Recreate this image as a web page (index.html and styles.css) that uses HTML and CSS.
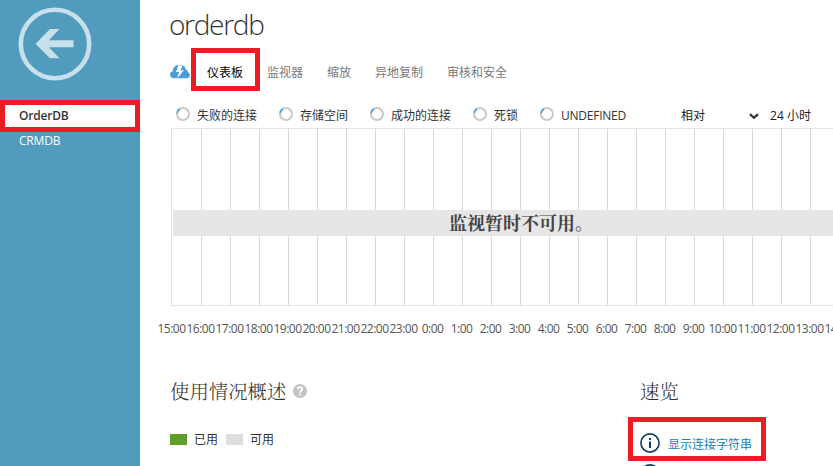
FILE: index.html
```html
<!DOCTYPE html>
<html lang="zh-CN">
<head>
<meta charset="utf-8">
<title>orderdb</title>
<link rel="stylesheet" href="styles.css">
</head>
<body>
<aside class="sidebar">
  <svg class="back" width="74" height="74" viewBox="0 0 74 74">
    <circle cx="37" cy="37" r="34.2" fill="none" stroke="#c8dfec" stroke-width="4.6"/>
    <path d="M17.500 36.700L32 22h9.500L31 33.200H55.500v7H31L41.500 51.300h-9.500z" fill="#c8dfec"/>
  </svg>
  <nav class="databases">
    <a class="database active">OrderDB</a>
    <a class="database">CRMDB</a>
  </nav>
</aside>
<main class="main">
  <h1 class="title"><span>orderdb</span></h1>
  <nav class="tabs">
    <svg class="cloud" width="20" height="14" viewBox="0 0 20 14">
      <path d="M4 13.2C-.9 13-1.1 6.7 2.8 6.200C2.600 1.100 7.500-.7 9.700.5C13-.6 15.500 1.600 15.600 4.400C18 4.500 17.700 6.300 17.500 7.100C20.900 8.200 20.500 13 17 13.200z" fill="#4c9bd9"/>
      <path d="M8.500.5L5.800 7.200l3.400-.4L7.200 13.500L14 5l-3.700.4L12.500.8z" fill="#fff"/>
    </svg>
    <a class="tab current">仪表板</a>
    <a class="tab">监视器</a>
    <a class="tab">缩放</a>
    <a class="tab">异地复制</a>
    <a class="tab">审核和安全</a>
  </nav>
  <div class="metrics">
    <span class="metric"><i class="spinner"></i>失败的连接</span>
    <span class="metric"><i class="spinner"></i>存储空间</span>
    <span class="metric"><i class="spinner"></i>成功的连接</span>
    <span class="metric"><i class="spinner"></i>死锁</span>
    <span class="metric undefined"><i class="spinner"></i>UNDEFINED</span>
    <span class="mode">相对</span>
    <svg class="chevron" width="10" height="7" viewBox="0 0 10 7"><path d="M1 1.200L5 4.800L9 1.200" fill="none" stroke="#333" stroke-width="2.300"/></svg>
    <span class="range">24 小时</span>
  </div>
  <div class="chart"><div class="notice">监视暂时不可用。</div></div>
  <div class="axis">
    <span>15:00</span><span>16:00</span><span>17:00</span><span>18:00</span><span>19:00</span><span>20:00</span><span>21:00</span><span>22:00</span><span>23:00</span><span>0:00</span><span>1:00</span><span>2:00</span><span>3:00</span><span>4:00</span><span>5:00</span><span>6:00</span><span>7:00</span><span>8:00</span><span>9:00</span><span>10:00</span><span>11:00</span><span>12:00</span><span>13:00</span><span>14:00</span>
  </div>
  <div class="panels">
    <section class="usage">
      <h2>使用情况概述
        <svg width="14" height="14" viewBox="0 0 14 14"><circle cx="7" cy="7" r="7" fill="#c3c3c3"/><path d="M4.700 5.300C4.700 2.400 9.300 2.400 9.300 5.100C9.300 6.800 7 6.700 7 8.700M7 9.700v1.900" fill="none" stroke="#fff" stroke-width="1.800"/></svg>
      </h2>
      <div class="legend"><i class="swatch used"></i><span>已用</span><i class="swatch free"></i><span>可用</span></div>
    </section>
    <section class="glance">
      <h2>速览</h2>
      <div class="links">
        <a class="link"><svg width="20" height="20" viewBox="0 0 20 20"><circle cx="10" cy="10" r="9.100" fill="none" stroke="#123f57" stroke-width="1.600"/><path d="M10 5v2M10 8.500V15" stroke="#123f57" stroke-width="2"/></svg><span>显示连接字符串</span></a>
        <svg width="20" height="20" viewBox="0 0 20 20"><circle cx="10" cy="10" r="9.100" fill="none" stroke="#123f57" stroke-width="1.600"/></svg>
      </div>
    </section>
  </div>
</main>
</body>
</html>
```
FILE: styles.css
```css
*, *::before { box-sizing: border-box; }
body {
  margin: 0;
  width: 833px;
  height: 466px;
  overflow: hidden;
  display: flex;
  background: #fff;
  color: #333;
  font: 12px/16px "Open Sans", "Noto Sans CJK SC", sans-serif;
}
.sidebar { width: 140px; flex: none; background: #519bbd; }
.back { display: block; margin: 7px 0 19px 18px; }
.database { display: block; height: 18px; padding-left: 19px; color: #fff; line-height: 18px; letter-spacing: -0.2px; }
.database.active {
  height: 32px;
  border: 5px solid #ed1c24;
  padding-left: 14px;
  background: #fff;
  color: #333;
  font-weight: 600;
  line-height: 22px;
}
.main { width: 693px; height: 466px; flex: none; overflow: hidden; }
.title { margin: 0; padding: 5px 0 0 29px; height: 58px; font-size: 28px; line-height: 38px; font-weight: 300; letter-spacing: -1.3px; }
.tabs { display: flex; align-items: center; height: 28px; padding-left: 30px; color: #777; }
.cloud { margin-right: 17px; }
.tab { position: relative; top: 1px; margin-right: 24px; }
.tab.current { color: #000; }
.tab.current::before {
  content: "";
  position: absolute;
  left: -16px;
  top: -17px;
  width: 69px;
  height: 43px;
  border: 5px solid #ed1c24;
}
.metrics { display: flex; align-items: center; height: 42px; padding: 23px 0 5px 36px; white-space: nowrap; }
.metric { display: flex; align-items: center; margin-right: 22px; height: 14px; }
.undefined { width: 86px; margin-right: 55px; font-size: 12px; letter-spacing: -0.25px; }
.spinner {
  width: 14px;
  height: 14px;
  flex: none;
  margin: -4px 7px 0 0;
  border-radius: 50%;
  background: radial-gradient(#fff 0 4.600px, transparent 5.200px), conic-gradient(#c9c9c9 0 76%, #4ba6e3 77% 91%, #c9c9c9 92%);
}
.mode { width: 24px; margin-right: 44px; color: #222; }
.chevron { margin-right: 11px; }
.range { color: #222; }
.chart {
  height: 178px;
  margin-left: 31px;
  padding: 81px 0 0 1px;
  border: 1px solid #e3e3e3;
  border-right: 0;
  background: repeating-linear-gradient(90deg, transparent 0 28px, #d8d8d8 28px 29px) 0 0 / 1000px 100%;
  background-position-x: 1px;
}
.notice {
  height: 26px;
  padding-left: 276px;
  background: #e6e6e6;
  color: #444;
  font: bold 18px/29px "Liberation Serif", "Noto Serif CJK SC", "Noto Sans CJK SC", serif;
}
.axis { display: flex; height: 40px; padding: 15px 0 0 17px; font-size: 12px; letter-spacing: -0.5px; color: #555; }
.axis span { flex: 0 0 29px; text-align: center; }
.panels { display: flex; height: 120px; padding: 33px 0 0 30px; }
.usage { width: 470px; }
h2 { display: flex; align-items: center; gap: 7px; margin: 0; height: 24px; font: 300 19.400px/24px "Noto Serif CJK SC", "Noto Sans CJK SC", serif; }
.legend { display: flex; align-items: center; height: 16px; margin-top: 28px; }
.legend span { margin: 1px 8px 0 7px; }
.swatch { width: 17px; height: 11px; }
.used { background: #5e9e29; }
.free { background: #dedede; }
.links { position: relative; padding-top: 30px; }
.links::before {
  content: "";
  position: absolute;
  left: -12px;
  top: 14px;
  width: 138px;
  height: 44px;
  border: 5px solid #ed1c24;
}
.link { display: flex; align-items: center; gap: 8px; height: 20px; margin-bottom: 11px; color: #1682bd; }
.link span { padding-top: 3px; }
```
